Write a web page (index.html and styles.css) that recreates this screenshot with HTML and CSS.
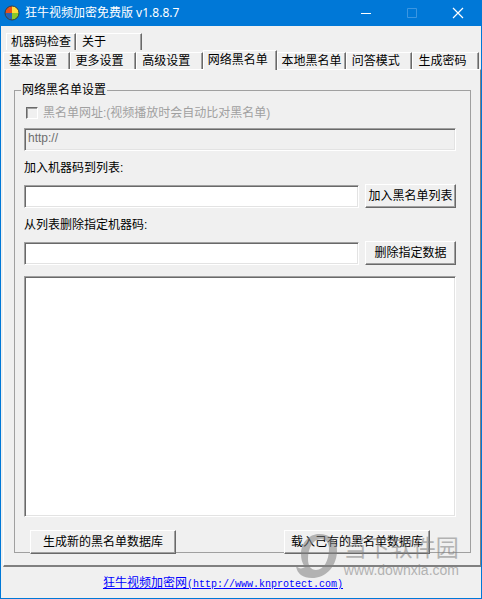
FILE: index.html
```html
<!DOCTYPE html>
<html lang="zh-CN">
<head>
	<meta charset="UTF-8">
	<title>狂牛视频加密免费版 v1.8.8.7</title>
	<link rel="stylesheet" href="styles.css">
</head>
<body>
	<div class="window">
		<div class="titlebar">
			<svg class="logo" viewBox="0 0 16 16" width="16" height="16">
				<path d="M8 8V1A7 7 0 0 0 1 8z" fill="#e8501c"/>
				<path d="M8 8V1A7 7 0 0 1 15 8z" fill="#ffdc3c"/>
				<path d="M8 8H1A7 7 0 0 0 8 15z" fill="#f0b41e"/>
				<path d="M8 8H15A7 7 0 0 1 8 15z" fill="#8cc828"/>
				<path d="M1 8A7 7 0 0 0 8 15V8z" fill="#2864b4"/>
				<circle cx="8" cy="8" r="7" fill="none" stroke="#323c46" stroke-width="1"/>
			</svg>
			<h1>狂牛视频加密免费版 v1.8.8.7</h1>
			<button class="sys" aria-label="最小化"><svg width="12" height="12"><path d="M1 6.5H11" stroke="#fff"/></svg></button>
			<button class="sys" aria-label="最大化" disabled><svg width="12" height="12"><path d="M1.5 1.5H10.5V10.5H1.5z" fill="none" stroke="#3c96e1"/></svg></button>
			<button class="sys" aria-label="关闭"><svg width="12" height="12"><path d="M1 1L11 11M11 1L1 11" stroke="#fff" stroke-width="1.2"/></svg></button>
		</div>

		<div class="tabs tabs-back">
			<button class="tab">机器码检查</button>
			<button class="tab">关于</button>
		</div>
		<div class="tabs tabs-front">
			<button class="tab">基本设置</button>
			<button class="tab">更多设置</button>
			<button class="tab">高级设置</button>
			<button class="tab current">网络黑名单</button>
			<button class="tab">本地黑名单</button>
			<button class="tab">问答模式</button>
			<button class="tab">生成密码</button>
		</div>

		<div class="panel">
			<fieldset class="group">
				<legend>网络黑名单设置</legend>
				<div class="check">
					<input type="checkbox" id="use-url" disabled>
					<label for="use-url">黑名单网址:(视频播放时会自动比对黑名单)</label>
				</div>
				<input class="field" type="text" value="http://" aria-label="黑名单网址" disabled>

				<label class="caption" for="add-code">加入机器码到列表:</label>
				<div class="row">
					<input class="field" type="text" id="add-code">
					<button class="btn">加入黑名单列表</button>
				</div>

				<label class="caption" for="del-code">从列表删除指定机器码:</label>
				<div class="row">
					<input class="field" type="text" id="del-code">
					<button class="btn">删除指定数据</button>
				</div>

				<select class="list" multiple aria-label="黑名单列表"></select>

				<div class="actions">
					<button class="btn">生成新的黑名单数据库</button>
					<button class="btn">载入己有的黑名单数据库</button>
				</div>
			</fieldset>
		</div>

		<div class="footer">
			<a href="http://www.knprotect.com">狂牛视频加密网<span>(http://www.knprotect.com)</span></a>
		</div>

		<div class="watermark">
			<svg viewBox="0 0 44 44" width="44" height="44">
				<path fill-rule="evenodd" d="M23 0C34 0 42 7 41 18C40 34 29 44 16 44C7 44 1 40 0 32C3 35 6 35 9 33C6 29 5 25 5 20C5 9 13 0 23 0zM25 5C17 5 12 14 12 25C12 32 15 36 20 36C28 36 33 26 33 15C33 9 30 5 25 5z"/>
			</svg>
			<div>
				<strong>当下软件园</strong>
				<em>www.downxia.com</em>
			</div>
		</div>
	</div>
</body>
</html>
```

FILE: styles.css
```css
*{padding: 0;margin: 0;box-sizing: border-box;}
body{
	background-color: #f0f0f0;
	font: 12px/16px "Liberation Sans", "Noto Sans CJK SC", sans-serif;
	color: #000;
}
button, input, select{
	font: inherit;
	color: inherit;
	border-radius: 0;
}
.window{
	position: relative;
	display: flex;
	flex-direction: column;
	min-height: 100vh;
	border: 1px solid #0078d7;
	border-top: 0;
	overflow: hidden;
}

/* title bar */
.titlebar{
	display: flex;
	align-items: center;
	height: 26px;
	padding-left: 3px;
	background-color: #0078d7;
}
.titlebar h1{
	flex: 1;
	margin-left: 5px;
	font-size: 12px;
	font-weight: normal;
	font-family: "Noto Sans", "Noto Sans CJK SC", sans-serif;
	color: #fff;
}
.sys{
	display: flex;
	align-items: center;
	justify-content: center;
	width: 46px;
	height: 26px;
	border: 0;
	background: none;
}

/* tabs */
.tabs{
	display: flex;
	align-items: flex-end;
}
.tabs-back{
	padding: 7px 4px 0 5px;
}
.tabs-front{
	padding: 0 2px;
}
.tab{
	flex: 66 1 0;
	height: 17px;
	padding-left: 5px;
	line-height: 14px;
	text-align: left;
	white-space: nowrap;
	background-color: #f0f0f0;
	border: solid;
	border-width: 1px 1px 0 1px;
	border-color: #fff #696969 #fff #fff;
	box-shadow: inset -1px 0 #a0a0a0;
}
.tabs-back .tab{
	flex: none;
	width: 66px;
}
.tabs-back .tab:first-child{
	width: 70px;
	padding-left: 4px;
}
.tab.current{
	position: relative;
	flex-grow: 75;
	height: 20px;
	margin-bottom: -1px;
	padding-bottom: 2px;
}
.tab.current + .tab{
	flex-grow: 70;
}
.tab.current, .tab.current + .tab{
	padding-left: 4px;
}

/* page */
.panel{
	flex: 1;
	display: flex;
	margin-left: 2px;
	padding: 12px 9px 12px 10px;
	border: solid;
	border-width: 1px 1px 2px 1px;
	border-color: #fff #808080 #808080 #fff;
}
.group{
	flex: 1;
	display: flex;
	flex-direction: column;
	min-width: 0;
	padding: 7px 14px 0 9px;
	border: 1px solid #a0a0a0;
}
.group legend{
	margin-left: -3px;
	padding: 0 1px;
}
.check{
	display: flex;
	align-items: center;
	gap: 5px;
	margin-left: 2px;
	color: #a0a0a0;
}
.check input{
	appearance: none;
	width: 12px;
	height: 12px;
	border: 1px solid;
	border-color: #696969 #fff #fff #696969;
	box-shadow: inset 1px 1px #a0a0a0;
}
.field{
	display: block;
	height: 23px;
	padding: 0 3px 4px;
}
.field, .list{
	background-color: #fff;
	border: 1px solid;
	border-color: #a0a0a0 #fff #fff #a0a0a0;
	box-shadow: inset 1px 1px #696969, inset -1px -1px #e3e3e3;
}
.field:disabled{
	margin-top: 7px;
	background-color: #f0f0f0;
	color: #6d6d6d;
}
.caption{
	margin: 9px 0 8px;
}
.row{
	display: flex;
	align-items: center;
	gap: 6px;
}
.row .field{
	flex: 1;
	min-width: 0;
}
.btn{
	height: 24px;
	background-color: #f0f0f0;
	border: 1px solid;
	border-color: #fff #696969 #696969 #fff;
	box-shadow: inset -1px -1px #a0a0a0;
	white-space: nowrap;
}
.row .btn{
	width: 91px;
}
.list{
	flex: 1;
	min-height: 100px;
	margin-top: 11px;
}
.actions{
	display: flex;
	justify-content: space-between;
	margin: 13px 26px -2px 6px;
}
.actions .btn{
	width: 146px;
}

.footer{
	padding: 8px 36px 7px 0;
	line-height: 16px;
	text-align: center;
}
.footer a{
	color: #0000ff;
}
.footer span{
	font: 10px/10px "Liberation Mono", monospace;
}

/* site mark over the lower right corner */
.watermark{
	position: absolute;
	right: 22px;
	bottom: 20px;
	display: flex;
	gap: 4px;
	opacity: .55;
	color: #808080;
	fill: #808080;
	pointer-events: none;
}
.watermark strong{
	display: block;
	font-size: 23px;
	line-height: 28px;
	font-weight: normal;
}
.watermark em{
	display: block;
	font-style: normal;
	font-size: 14px;
	line-height: 16px;
}
```
